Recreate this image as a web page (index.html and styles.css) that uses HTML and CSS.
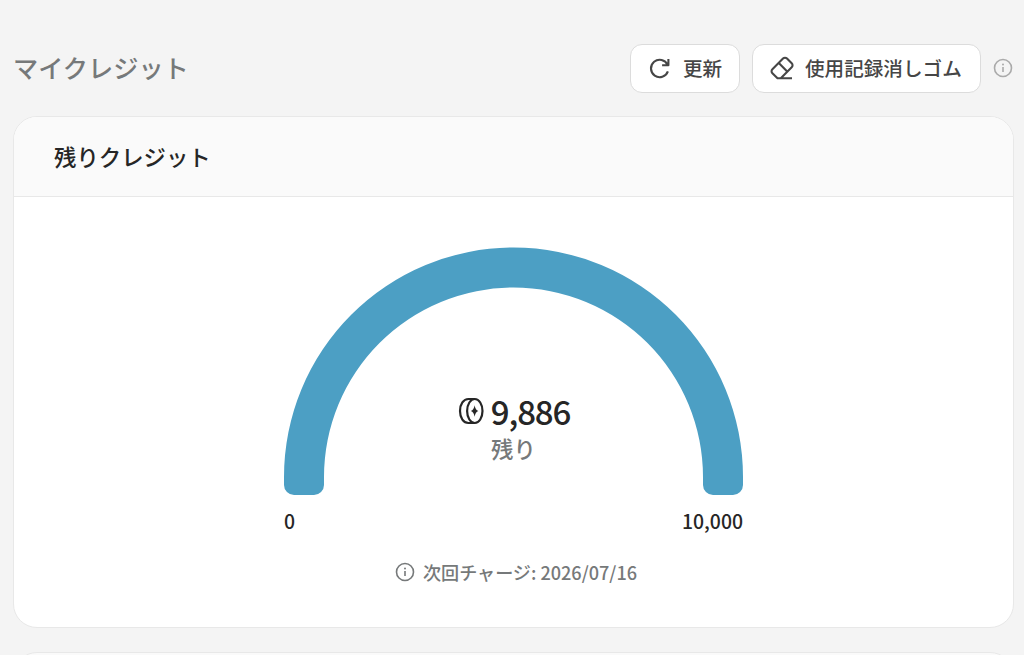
FILE: index.html
```html
<!DOCTYPE html>
<html lang="ja">
<head>
  <meta charset="utf-8">
  <title>マイクレジット</title>
  <link rel="stylesheet" href="styles.css">
</head>
<body>
  <header class="page-header">
    <h1>マイクレジット</h1>
    <div class="actions">
      <button class="btn">
        <svg class="icon" viewBox="0 0 24 24"><path d="M20.400 3v6.300h-6.300M19.600 8.800A8.700 8.700 0 1 0 19.900 15.400"/></svg>
        更新
      </button>
      <button class="btn btn-eraser">
        <svg class="icon" viewBox="0 0 24 24"><path d="M22 22.300H7.500L2.400 17.200a2.800 2.800 0 0 1 0-4L13 2.600a2.800 2.800 0 0 1 4 0l4.700 4.700a2.800 2.800 0 0 1 0 4L10.800 22.200M8.800 7.100l8.400 8.400"/></svg>
        使用記録消しゴム
      </button>
      <svg class="info info-light" viewBox="0 0 20 20"><circle cx="10" cy="10" r="8.500"/><path d="M10 9v5"/><circle class="dot" cx="10" cy="6.400" r="1"/></svg>
    </div>
  </header>

  <section class="card">
    <h2 class="card-header">残りクレジット</h2>
    <div class="card-body">
      <div class="gauge">
        <svg class="arc" viewBox="0 0 459 248">
          <path d="M0 230a229.500 229.500 0 0 1 459 0V238a10 10 0 0 1-10 10H429a10 10 0 0 1-10-10V230a189.500 189.500 0 0 0-379 0V238a10 10 0 0 1-10 10H10a10 10 0 0 1-10-10z"/>
        </svg>
        <!-- Value shown inside the arc -->
        <div class="gauge-label">
          <div class="amount">
            <svg class="coin" viewBox="0 0 26 28"><ellipse cx="16.800" cy="14" rx="7.700" ry="12"/><path d="M17 2H10.500C5.500 2 2 7 2 14s3.500 12 8.500 12H17"/><path class="spark" d="M16.600 8.200q.7 4.800 3.700 5.800-3 1-3.700 5.800-.7-4.800-3.700-5.800 3-1 3.700-5.800z"/></svg>
            <span>9,886</span>
          </div>
          <div class="caption">残り</div>
        </div>
      </div>
      <div class="scale"><span>0</span><span>10,000</span></div>
      <div class="recharge">
        <svg class="info" viewBox="0 0 20 20"><circle cx="10" cy="10" r="8.500"/><path d="M10 9v5"/><circle class="dot" cx="10" cy="6.400" r="1"/></svg>
        <span>次回チャージ: 2026/07/16</span>
      </div>
    </div>
  </section>

  <div class="next">
    <section class="card card-next"></section>
  </div>
</body>
</html>
```
FILE: styles.css
```css
* {
  box-sizing: border-box;
}
body {
  margin: 0;
  height: 655px;
  padding: 43px 11px 0 13px;
  background-color: #f4f4f4;
  color: #262626;
  font-family: "Noto Sans CJK JP", sans-serif;
  font-weight: 500;
}
h1, h2 {
  margin: 0;
  font-weight: 500;
}
svg {
  display: block;
  flex: none;
  fill: none;
  stroke: currentColor;
}
.page-header {
  display: flex;
  justify-content: space-between;
  align-items: center;
  height: 50px;
  margin-bottom: 23px;
}
h1 {
  margin-top: -2px;
  font-size: 25.2px;
  color: #76797a;
}
.actions {
  display: flex;
  align-items: center;
  gap: 12px;
}
.btn {
  display: flex;
  align-items: center;
  gap: 11px;
  width: 110px;
  height: 49px;
  padding: 0 0 1px 17px;
  border: 1px solid #dcdcdc;
  border-radius: 12px;
  background-color: #fff;
  color: #464646;
  font: inherit;
  font-size: 19.6px;
  white-space: nowrap;
}
.btn-eraser {
  width: 229px;
}
.icon {
  width: 24px;
  height: 24px;
  stroke-width: 2.1;
  stroke-linejoin: round;
}
.info {
  width: 20px;
  height: 20px;
  stroke-width: 1.6;
}
.info-light {
  color: #aaa;
}
.dot {
  fill: currentColor;
  stroke: none;
}
.card {
  width: 1001px;
  height: 512px;
  border: 1px solid #e8e8e8;
  border-radius: 24px;
  background-color: #fff;
  overflow: hidden;
}
.card-header {
  height: 80px;
  padding-left: 40px;
  border-bottom: 1px solid #e8e8e8;
  background-color: #fafafa;
  font-size: 22.4px;
  line-height: 79px;
}
.card-body {
  display: flex;
  flex-direction: column;
  align-items: center;
  padding-top: 50px;
}
.gauge {
  display: grid;
  width: 459px;
  height: 248px;
}
.arc, .gauge-label {
  grid-area: 1 / 1;
}
.arc {
  width: 459px;
  height: 248px;
  fill: #4c9fc4;
  stroke: none;
}
.gauge-label {
  padding-top: 144px;
  text-align: center;
}
.amount {
  display: flex;
  justify-content: center;
  align-items: center;
  gap: 7px;
  height: 40px;
  padding-left: 1px;
  font-size: 33px;
  letter-spacing: -1.1px;
  line-height: 40px;
}
.coin {
  width: 26px;
  height: 28px;
  stroke-width: 2.2;
}
.spark {
  fill: currentColor;
  stroke: none;
}
.caption {
  height: 34px;
  color: #76797a;
  font-size: 22.4px;
  line-height: 34px;
}
.scale {
  display: flex;
  justify-content: space-between;
  width: 459px;
  margin-top: 12px;
  font-size: 19.4px;
  line-height: 28px;
}
.recharge {
  display: flex;
  align-items: center;
  gap: 8px;
  height: 28px;
  margin: 23px 0 0 5px;
  color: #76797a;
  font-size: 18.1px;
}
.recharge span {
  margin-top: -1px;
}
/* Only the top edge of the following card is in view */
.next {
  height: 3px;
  margin-top: 24px;
  overflow: hidden;
}
.card-next {
  height: 60px;
  background-color: #fafafa;
}
```
